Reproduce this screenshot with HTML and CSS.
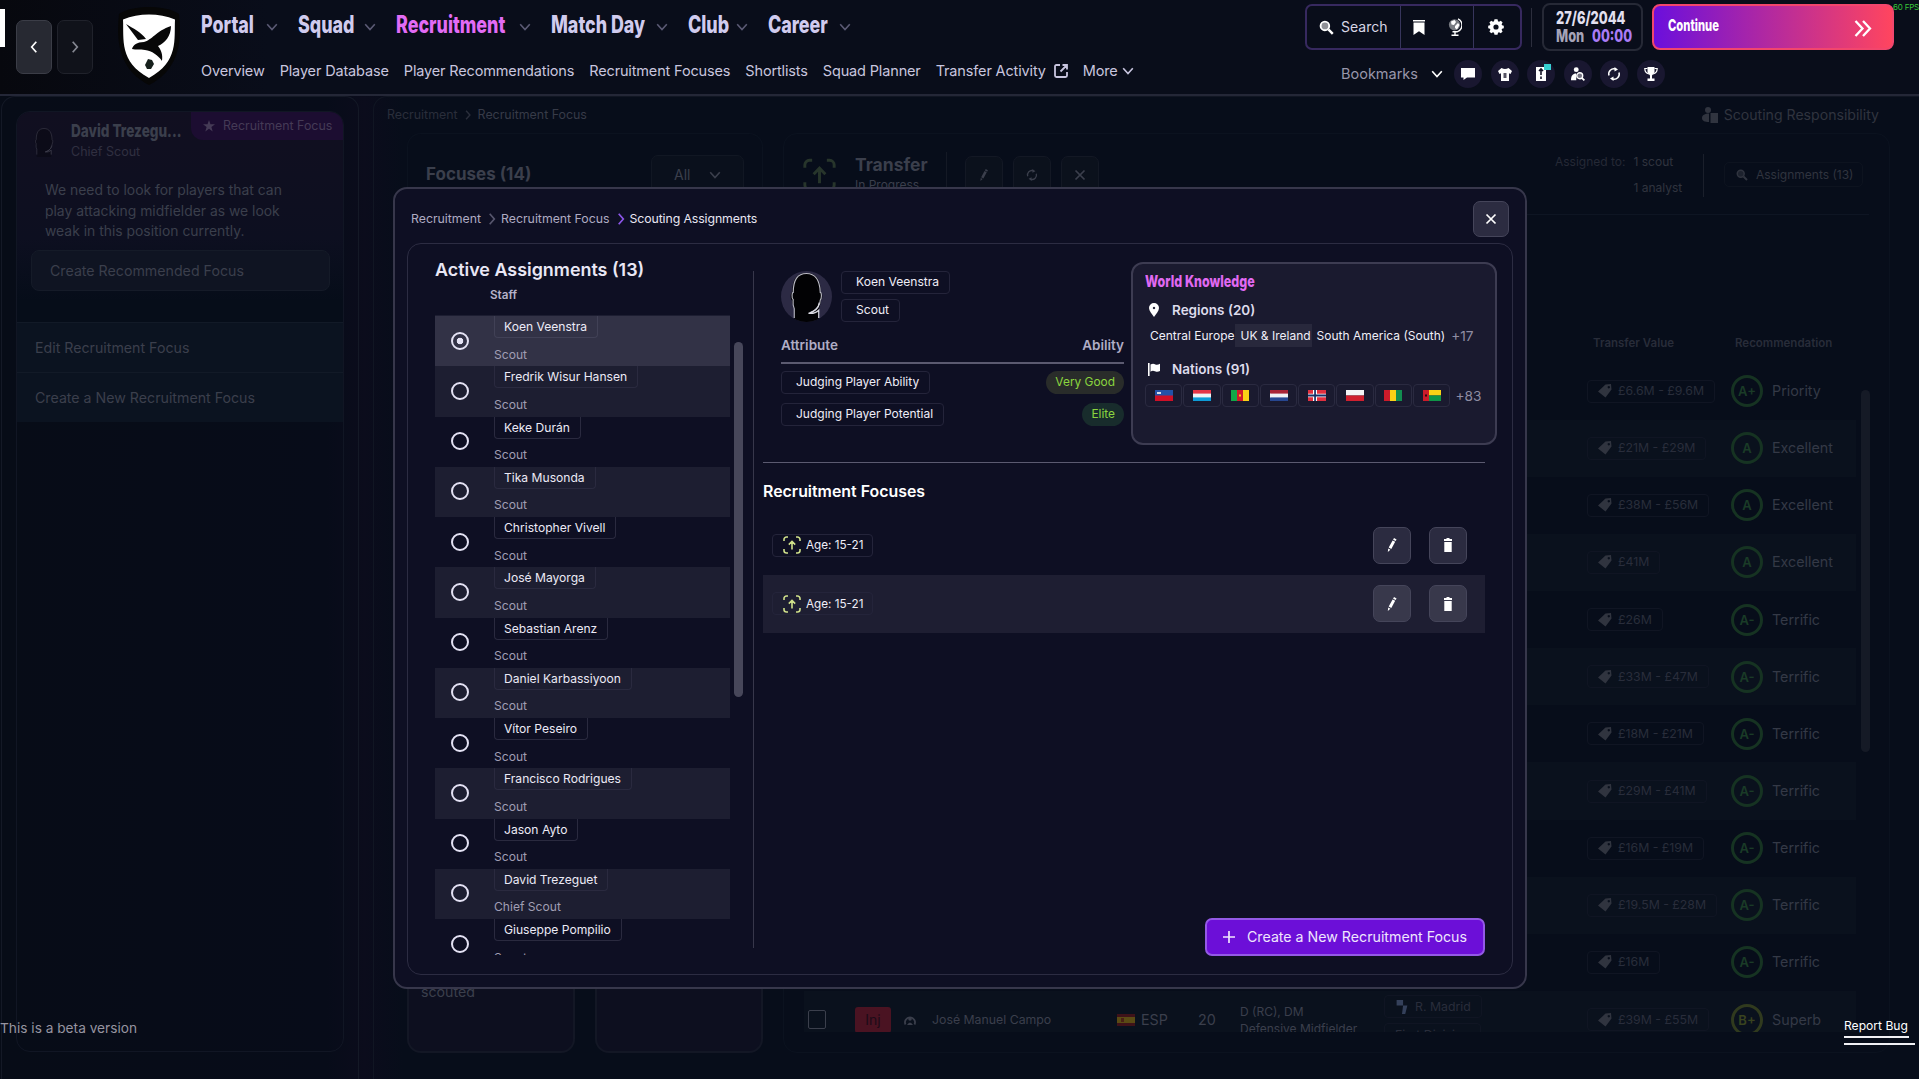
FILE: index.html
```html
<!DOCTYPE html>
<html lang="en">
<head>
<meta charset="utf-8">
<title>Scouting Assignments</title>
<link rel="stylesheet" href="styles.css">
</head>
<body>
<svg class="sprite" aria-hidden="true">
  <symbol id="down" viewBox="0 0 12 12"><path d="M1.2 3.2 6 8.6l4.800-5.400" fill="none" stroke="currentColor" stroke-width="1.600"/></symbol>
  <symbol id="right" viewBox="0 0 12 12"><path d="M3.700.8 8.300 6l-4.600 5.200" fill="none" stroke="currentColor" stroke-width="1.700"/></symbol>
  <symbol id="left" viewBox="0 0 12 12"><path d="M8.300.8 3.700 6l4.600 5.200" fill="none" stroke="currentColor" stroke-width="1.700"/></symbol>
  <symbol id="search" viewBox="0 0 16 16"><circle cx="6.300" cy="6.300" r="4.600" fill="currentColor" fill-opacity=".55" stroke="currentColor" stroke-width="2"/><path d="m10 10 4.700 4.700" stroke="currentColor" stroke-width="2.600"/></symbol>
  <symbol id="bookmark" viewBox="0 0 12 15"><path d="M0 0h12v1.500H0zM.5 2.500h11V15L6 11.200.5 15z" fill="currentColor"/></symbol>
  <symbol id="globe" viewBox="0 0 14 18"><circle cx="6.500" cy="6.800" r="5.600" fill="currentColor" fill-opacity=".45"/><path d="M3 3.500 6.500 2l1.500 2-2 3-2.500-.5zM7 8l3-3 1.500 2L9 11.500 7 10z" fill="currentColor"/><path d="M10 .8a7 7 0 0 1-1 13H4.500M7 14v3M3.500 17.200h7" fill="none" stroke="currentColor" stroke-width="1.400"/></symbol>
  <symbol id="gear" viewBox="0 0 16 16"><path fill="currentColor" fill-rule="evenodd" d="m6.500.3-.5 2-1 .4-1.800-1L1.400 3.500l1 1.700-.5 1.100-1.700.4v2.600l1.700.4.5 1.100-1 1.700 1.800 1.800 1.800-1 1 .4.500 2h3l.5-2 1-.4 1.800 1 1.800-1.800-1-1.700.5-1.100 1.700-.4V6.700l-1.700-.4-.5-1.100 1-1.700-1.800-1.800-1.800 1-1-.4-.5-2zM8 5.400a2.600 2.600 0 1 1 0 5.200 2.600 2.600 0 0 1 0-5.200z"/></symbol>
  <symbol id="refresh" viewBox="0 0 14 14"><path d="M2 8.500A5.200 5.200 0 0 1 8.500 2M12 5.500A5.200 5.200 0 0 1 5.500 12" fill="none" stroke="currentColor" stroke-width="1.500"/><path d="M7.500 0 11 2.500 7.500 4.500zM6.500 14 3 11.500l3.500-2z" fill="currentColor"/></symbol>
  <symbol id="pencil" viewBox="0 0 12 14"><path d="m8 0 2.600 1.400-.9 1.700-2.600-1.400zM6.600 2.400l2.600 1.400-3.900 7.200-2.600-1.400zM2.200 10.600l2.200 1.200L1.800 14z" fill="currentColor"/></symbol>
  <symbol id="trash" viewBox="0 0 12 14"><path d="M4.500 0h3v1H10v2H2V1h2.500zM2.300 4h7.400v10H2.300z" fill="currentColor"/></symbol>
  <symbol id="focus" viewBox="0 0 18 18"><path d="M1 5V3.500A2.500 2.500 0 0 1 3.500 1H5M13 1h1.500A2.500 2.500 0 0 1 17 3.500V5M17 13v1.500a2.500 2.500 0 0 1-2.500 2.500H13M5 17H3.500A2.500 2.500 0 0 1 1 14.500V13M9 13.500V6M5.800 8.600 9 5.300l3.200 3.300" fill="none" stroke="currentColor" stroke-width="1.600"/></symbol>
  <symbol id="tag" viewBox="0 0 14 14"><path fill="currentColor" fill-rule="evenodd" d="M7.500.5 13 0l.5 5.500-6 8L0 7.600zM10.800 2a1.200 1.200 0 1 0 .01 0z"/></symbol>
  <symbol id="cross" viewBox="0 0 12 12"><path d="m1.500 1.500 9 9m0-9-9 9" stroke="currentColor" stroke-width="1.700"/></symbol>
  <symbol id="scoutman" viewBox="0 0 16 16"><circle cx="6" cy="3" r="2.800" fill="currentColor"/><path d="M0 15c0-5 2-7.500 6-7.500V15z" fill="currentColor"/><circle cx="10" cy="10" r="3.400" fill="currentColor" fill-opacity=".4" stroke="currentColor" stroke-width="1.500"/><path d="m12.300 12.300 3 3" stroke="currentColor" stroke-width="2"/></symbol>
  <symbol id="head" viewBox="0 0 50 50"><path d="M13 50V37c-1-2-2-5-2-8-2-1-2-8 0-8C11 9 15 2 25 2s14 7 14 19c2 0 2 7 0 8 0 3-1 6-2 8v13z" fill="#020204"/><path d="M13 46v-9c-2-4-1-7-1-9-2-2-1-7 0-7C12 9 16 2.500 25 2.500S38 9 38.500 21c1.500 0 1.500 6 0 7.500 0 5-2 9-10 12.500" fill="none" stroke="#b9b9c4" stroke-width="1.100"/><path d="M37.500 31c-.5 5-3.500 8.500-10.500 10.500 4 .5 7.500-.5 10-3V46" fill="none" stroke="#dcdce4" stroke-width="1.200"/></symbol>
</svg>

<header class="topbar">
  <i class="corner"></i>
  <div class="history">
    <button class="hist on"><svg><use href="#left"/></svg></button>
    <button class="hist"><svg><use href="#right"/></svg></button>
  </div>
  <svg class="crest" viewBox="0 0 64 78"><path d="M32 0c12 0 22 2 30 7 2 20 4 54-30 71C-2 61 0 27 2 7 10 2 20 0 32 0z" fill="#070707"/><path d="M32 7.500c9 0 18 1.500 26 5-1 20 4 42-26 58.500C2 54.500 7 32.500 6 12.500c8-3.500 17-5 26-5z" fill="#fff"/><path d="M9 17c8 5 15 8 20 15l-8 1zM54 19c0 10-6 17-13 20 3 4 5 8 4 15-4-6-10-10-17-11-5-1-9 0-13-1 1-4 5-7 12-7 8-2 12-11 27-16z" fill="#070707"/><path d="m31 52 4 1 2 4-3 5h-4l-2-4z" fill="#16201c"/></svg>
  <div class="menus">
    <nav class="mainnav">
      <a><b class="cond">Portal</b><svg><use href="#down"/></svg></a>
      <a><b class="cond">Squad</b><svg><use href="#down"/></svg></a>
      <a class="active"><b class="cond">Recruitment</b><svg><use href="#down"/></svg></a>
      <a><b class="cond">Match Day</b><svg><use href="#down"/></svg></a>
      <a><b class="cond">Club</b><svg><use href="#down"/></svg></a>
      <a><b class="cond">Career</b><svg><use href="#down"/></svg></a>
    </nav>
    <nav class="subnav">
      <a>Overview</a><a>Player Database</a><a>Player Recommendations</a><a>Recruitment Focuses</a><a>Shortlists</a><a>Squad Planner</a><a>Transfer Activity<svg class="ext" viewBox="0 0 14 14"><path d="M6 1H2.500Q1 1 1 2.500v9Q1 13 2.500 13h9q1.500 0 1.500-1.500V8M8.500 1H13v4.500M13 1 6.500 7.500" fill="none" stroke="currentColor" stroke-width="1.800"/></svg></a><a>More<svg class="more"><use href="#down"/></svg></a>
    </nav>
  </div>
  <div class="tools">
    <div class="toolrow">
      <div class="searchbox">
        <div class="find"><svg><use href="#search"/></svg>Search</div>
        <div class="pair"><svg class="bm"><use href="#bookmark"/></svg><svg class="gl"><use href="#globe"/></svg></div>
        <div class="cog"><svg><use href="#gear"/></svg></div>
      </div>
      <i class="sep"></i>
      <div class="date"><b class="cond">27/6/2044</b><div><b class="cond mon">Mon</b><b class="cond time">00:00</b></div></div>
      <button class="continue"><b class="cond">Continue</b><svg viewBox="0 0 18 17"><path d="m1.500 1 7 7.500-7 7.500M9 1l7 7.500L9 16" fill="none" stroke="currentColor" stroke-width="2.300"/></svg></button>
    </div>
    <div class="bookmarks">
      <span>Bookmarks</span><svg class="bchev"><use href="#down"/></svg>
      <i><svg viewBox="0 0 14 14"><path d="M0 1h14v9.500H6L2.500 13v-2.500H0z" fill="currentColor"/></svg></i>
      <i><svg viewBox="0 0 14 14"><path d="M3.500 1Q7 3 10.500 1L14 4l-1.500 3-1.500-.8V14H3V6.200L1.500 7 0 4z" fill="currentColor"/><path d="M5.500 6h3v5h-3z" fill="#565464"/></svg></i>
      <i class="noted"><svg viewBox="0 0 14 14"><path d="M2 0h10v14H2z" fill="currentColor"/><path d="M7 2v6M7 9.500V12M5 4l2-2 2 2" stroke="#131225" stroke-width="1.600" fill="none"/></svg><em></em></i>
      <i><svg><use href="#scoutman"/></svg></i>
      <i><svg><use href="#refresh"/></svg></i>
      <i><svg viewBox="0 0 14 14"><path d="M3.500 0h7v5.500L8 8.500v3h2.500V14h-7v-2.500H6v-3l-2.500-3z" fill="currentColor"/><path d="M3.500 1.500H.8C.8 5 2.500 6.500 5 7M10.500 1.500h2.700C13.200 5 11.500 6.500 9 7" fill="none" stroke="currentColor" stroke-width="1.200"/></svg></i>
    </div>
  </div>
  <span class="fps">60 FPS</span>
</header>

<main class="app">
  <aside class="side">
    <div class="sidecard">
      <section class="advice">
        <span class="ribbon"><svg viewBox="0 0 14 14"><path d="m7 0 1.700 5H14L9.800 8.200l1.500 5.200L7 10.300l-4.300 3.100 1.500-5.200L0 5h5.300z" fill="currentColor"/></svg>Recruitment Focus</span>
        <div class="person"><svg><use href="#head"/></svg><div><b class="cond">David Trezegu...</b><span>Chief Scout</span></div></div>
        <p>We need to look for players that can<br>play attacking midfielder as we look<br>weak in this position currently.</p>
        <div class="recommended">Create Recommended Focus</div>
      </section>
      <div class="action">Edit Recruitment Focus</div>
      <div class="action">Create a New Recruitment Focus</div>
    </div>
  </aside>
  <section class="content">
    <div class="contenthead">
      <span>Recruitment</span><svg><use href="#right"/></svg><span class="here">Recruitment Focus</span>
      <div class="responsibility"><svg viewBox="0 0 16 16"><circle cx="6" cy="3" r="3" fill="currentColor"/><path d="M0 11c0-3 3-4.500 7-4.500V15C3 15 0 14 0 11zM8.500 6H16v10H8.500z" fill="currentColor"/></svg>Scouting Responsibility</div>
    </div>
    <div class="columns">
      <div class="focuses">
        <div class="fochead"><b>Focuses (14)</b><span class="all">All<svg><use href="#down"/></svg></span></div>
        <div class="foccards"><div class="foccard">scouted</div><div class="foccard"></div></div>
      </div>
      <div class="transfer">
        <div class="thead">
          <svg class="ticon"><use href="#focus"/></svg>
          <div class="tname"><b>Transfer</b><span>In Progress</span></div>
          <div class="tbtns"><i><svg><use href="#pencil"/></svg></i><i><svg><use href="#refresh"/></svg></i><i><svg><use href="#cross"/></svg></i></div>
          <div class="assigned"><span>Assigned to:</span><span>1 scout<br>1 analyst</span></div>
          <div class="assignments"><svg><use href="#search"/></svg>Assignments (13)</div>
        </div>
        <div class="tablewrap">
          <div class="trow labels"><span>Transfer Value</span><span>Recommendation</span></div>
          <div class="trow"><span><em><svg><use href="#tag"/></svg>£6.6M - £9.6M</em></span><i>A+</i><span>Priority</span></div>
          <div class="trow"><span><em><svg><use href="#tag"/></svg>£21M - £29M</em></span><i>A</i><span>Excellent</span></div>
          <div class="trow"><span><em><svg><use href="#tag"/></svg>£38M - £56M</em></span><i>A</i><span>Excellent</span></div>
          <div class="trow"><span><em><svg><use href="#tag"/></svg>£41M</em></span><i>A</i><span>Excellent</span></div>
          <div class="trow"><span><em><svg><use href="#tag"/></svg>£26M</em></span><i>A-</i><span>Terrific</span></div>
          <div class="trow"><span><em><svg><use href="#tag"/></svg>£33M - £47M</em></span><i>A-</i><span>Terrific</span></div>
          <div class="trow"><span><em><svg><use href="#tag"/></svg>£18M - £21M</em></span><i>A-</i><span>Terrific</span></div>
          <div class="trow"><span><em><svg><use href="#tag"/></svg>£29M - £41M</em></span><i>A-</i><span>Terrific</span></div>
          <div class="trow"><span><em><svg><use href="#tag"/></svg>£16M - £19M</em></span><i>A-</i><span>Terrific</span></div>
          <div class="trow"><span><em><svg><use href="#tag"/></svg>£19.5M - £28M</em></span><i>A-</i><span>Terrific</span></div>
          <div class="trow"><span><em><svg><use href="#tag"/></svg>£16M</em></span><i>A-</i><span>Terrific</span></div>
          <div class="trow player">
            <div class="who">
              <u class="check"></u><u class="inj">Inj</u>
              <svg class="face" viewBox="0 0 12 12"><path d="M1.500 10.500a5 5 0 1 1 9 0" fill="none" stroke="currentColor" stroke-width="1.800"/><circle cx="6" cy="5" r="1.800" fill="currentColor"/><path d="M3 11q3-5 6 0" fill="currentColor"/></svg>
              <span class="pname">José Manuel Campo</span>
              <svg class="esp" viewBox="0 0 18 12"><path d="M0 0h18v12H0z" fill="#3f1219"/><path d="M0 3h18v6H0z" fill="#5a4a14"/><path d="M4 4h3v4H4z" fill="#4a2015"/></svg>
              <span class="nat">ESP</span><span class="age">20</span>
              <span class="pos">D (RC), DM<br>Defensive Midfielder</span>
              <span class="club"><em><svg viewBox="0 0 10 13"><path d="M0 0h6v5H0zM6 5h4L8 13H5z" fill="#34405a"/></svg>R. Madrid</em><em>First Division</em></span>
            </div>
            <span><em><svg><use href="#tag"/></svg>£39M - £55M</em></span><i class="bplus">B+</i><span>Superb</span>
          </div>
          <i class="tscroll"></i>
        </div>
      </div>
    </div>
  </section>
</main>

<div class="modal">
  <div class="modalhead">
    <span>Recruitment</span><svg><use href="#right"/></svg><span>Recruitment Focus</span><svg class="lit"><use href="#right"/></svg><span class="here">Scouting Assignments</span>
    <button class="iconbtn close"><svg><use href="#cross"/></svg></button>
  </div>
  <div class="body">
    <section class="staff">
      <h2>Active Assignments (13)</h2>
      <h4>Staff</h4>
      <div class="listwrap">
        <div class="list">
          <div class="member picked"><u></u><div><em>Koen Veenstra</em><span>Scout</span></div></div>
          <div class="member"><u></u><div><em>Fredrik Wisur Hansen</em><span>Scout</span></div></div>
          <div class="member"><u></u><div><em>Keke Durán</em><span>Scout</span></div></div>
          <div class="member"><u></u><div><em>Tika Musonda</em><span>Scout</span></div></div>
          <div class="member"><u></u><div><em>Christopher Vivell</em><span>Scout</span></div></div>
          <div class="member"><u></u><div><em>José Mayorga</em><span>Scout</span></div></div>
          <div class="member"><u></u><div><em>Sebastian Arenz</em><span>Scout</span></div></div>
          <div class="member"><u></u><div><em>Daniel Karbassiyoon</em><span>Scout</span></div></div>
          <div class="member"><u></u><div><em>Vítor Peseiro</em><span>Scout</span></div></div>
          <div class="member"><u></u><div><em>Francisco Rodrigues</em><span>Scout</span></div></div>
          <div class="member"><u></u><div><em>Jason Ayto</em><span>Scout</span></div></div>
          <div class="member"><u></u><div><em>David Trezeguet</em><span>Chief Scout</span></div></div>
          <div class="member"><u></u><div><em>Giuseppe Pompilio</em><span>Scout</span></div></div>
        </div>
        <i class="bar"></i>
      </div>
    </section>
    <section class="detail">
      <div class="upper">
        <div class="profile">
          <div class="id"><span class="avatar"><svg><use href="#head"/></svg></span><div class="chips"><em class="chip">Koen Veenstra</em><em class="chip">Scout</em></div></div>
          <div class="attrhead"><b>Attribute</b><b>Ability</b></div>
          <div class="attr"><em class="chip">Judging Player Ability</em><span class="pill">Very Good</span></div>
          <div class="attr"><em class="chip">Judging Player Potential</em><span class="pill elite">Elite</span></div>
        </div>
        <div class="world">
          <b class="cond title">World Knowledge</b>
          <div class="wh"><svg viewBox="0 0 10 14"><path fill="#fff" fill-rule="evenodd" d="M5 0a5 5 0 0 1 5 5c0 3-3 6-5 9C3 11 0 8 0 5a5 5 0 0 1 5-5zm0 3.800a1.200 1.200 0 1 0 .01 0z"/></svg><b>Regions (20)</b></div>
          <div class="regions"><span>Central Europe</span><span class="uk">UK &amp; Ireland</span><span>South America (South)</span><small>+17</small></div>
          <div class="wh nations"><svg viewBox="0 0 12 13"><path d="M0 0h1.600v13H0zM2.500 1.500Q5 0 7 1.200t5-.4V8q-2.500 1.500-5 .3t-4.500.4z" fill="#fff"/></svg><b>Nations (91)</b></div>
          <div class="flags">
            <em><svg viewBox="0 0 18 11"><path d="M0 0h18v11H0z" fill="#cf1027"/><path d="M0 0h18v5.500H0z" fill="#2352a8"/><path d="M2 2h4v2H2z" fill="#d9dde8"/></svg></em>
            <em><svg viewBox="0 0 18 11"><path d="M0 0h18v11H0z" fill="#f0f2f4"/><path d="M0 0h18v3.600H0z" fill="#e63546"/><path d="M0 7.400h18V11H0z" fill="#0e9bd6"/></svg></em>
            <em><svg viewBox="0 0 18 11"><path d="M0 0h6v11H0z" fill="#12a848"/><path d="M6 0h6v11H6z" fill="#d01b2b"/><path d="M12 0h6v11h-6z" fill="#fbd116"/><path d="M8 4.500h2v2H8z" fill="#fbd116"/></svg></em>
            <em><svg viewBox="0 0 18 11"><path d="M0 0h18v11H0z" fill="#f0f0f4"/><path d="M0 0h18v3.600H0z" fill="#a92436"/><path d="M0 7.400h18V11H0z" fill="#27468f"/></svg></em>
            <em><svg viewBox="0 0 18 11"><path d="M0 0h18v11H0z" fill="#e0303f"/><path d="M5 0h4v11H5zM0 3.800h18v3.400H0z" fill="#fff"/><path d="M6.200 0h1.700v11H6.200zM0 4.600h18v1.800H0z" fill="#183068"/></svg></em>
            <em><svg viewBox="0 0 18 11"><path d="M0 0h18v5.500H0z" fill="#f4f4f6"/><path d="M0 5.500h18V11H0z" fill="#d0202f"/></svg></em>
            <em><svg viewBox="0 0 18 11"><path d="M0 0h6v11H0z" fill="#cc1b2a"/><path d="M6 0h6v11H6z" fill="#fbd116"/><path d="M12 0h6v11h-6z" fill="#128c50"/></svg></em>
            <em><svg viewBox="0 0 18 11"><path d="M0 0h18v5.500H0z" fill="#fbd116"/><path d="M0 5.500h18V11H0z" fill="#0f9548"/><path d="M0 0h6v11H0z" fill="#cc1b2a"/><path d="M2 4.500h2v2H2z" fill="#2a0a0c"/></svg></em>
            <small>+83</small>
          </div>
        </div>
      </div>
      <h3>Recruitment Focuses</h3>
      <div class="focusrow"><em class="chip"><svg><use href="#focus"/></svg>Age: 15-21</em><button class="iconbtn"><svg><use href="#pencil"/></svg></button><button class="iconbtn"><svg><use href="#trash"/></svg></button></div>
      <div class="focusrow alt"><em class="chip"><svg><use href="#focus"/></svg>Age: 15-21</em><button class="iconbtn"><svg><use href="#pencil"/></svg></button><button class="iconbtn"><svg><use href="#trash"/></svg></button></div>
      <button class="create"><svg viewBox="0 0 12 12"><path d="M6 0v12M0 6h12" stroke="currentColor" stroke-width="1.700"/></svg>Create a New Recruitment Focus</button>
    </section>
  </div>
</div>

<div class="beta">This is a beta version</div>
<div class="bug"><span>Report Bug</span></div>
</body>
</html>
```
FILE: styles.css
```css
* { box-sizing: border-box; }
html, body { margin: 0; height: 100%; overflow: hidden; }
body {
  width: 1919px; height: 1079px; position: relative;
  background: #080d1a; color: #e6e4f2;
  font: 12.1px/16px Inter, "Liberation Sans", sans-serif;
}
i, em, u { font-style: normal; text-decoration: none; }
button { font: inherit; color: inherit; padding: 0; background: none; border: 0; }
svg { display: block; flex: none; width: 12px; height: 12px; }
.sprite { display: none; }
h2, h3, h4, p { margin: 0; }
.cond { display: inline-block; transform: scaleX(.755); transform-origin: 0 50%; white-space: nowrap; font-weight: 800; }

/* top bar */
.topbar { position: relative; height: 96px; display: flex; border-bottom: 2px solid #242737; background: linear-gradient(90deg, #07080e, #090d1a 14%); }
.corner { width: 5px; height: 38px; margin-top: 9px; background: #fff; }
.history { display: flex; gap: 5px; margin: 20px 0 0 11px; }
.hist { width: 36px; height: 54px; border: 1px solid #20222b; border-radius: 7px; background: #10121a; color: #858791; display: grid; place-items: center; }
.hist.on { background: #272932; border-color: #3b3d47; color: #fff; }
.crest { width: 64px; height: 78px; margin: 7px 0 0 24px; }
.menus { flex: none; width: 1124px; padding: 10px 0 0 20px; }
.mainnav { display: grid; grid-template-columns: 97px 98px 155px 137px 80px 103px; height: 31px; align-items: center; font-size: 24px; line-height: 30px; color: #d0cbee; }
.mainnav a { display: flex; justify-content: space-between; align-items: center; padding-right: 20px; }
.mainnav .cond { width: 0; transform: scaleX(.745); margin-top: -1px; }
.mainnav svg { color: #5b5a74; margin-top: 3px; }
.mainnav .active { color: #e26bf5; }
.subnav { display: flex; gap: 15px; margin-top: 21px; font-size: 14.500px; line-height: 18px; color: #c8c5df; letter-spacing: -.15px; }
.subnav a { display: flex; white-space: nowrap; }
.ext { width: 14px; height: 14px; margin: 2px 0 0 8px; }
.more { margin: 3px 0 0 4px; }
.tools { flex: none; width: 614px; padding-top: 3px; }
.toolrow { display: flex; align-items: center; height: 48px; }
.searchbox { display: flex; width: 217px; height: 46px; border: 2px solid #37295f; border-radius: 7px; color: #fff; }
.searchbox > div { display: flex; align-items: center; }
.find { width: 93px; padding-left: 12px; gap: 7px; font-size: 14px; color: #d8d6e6; }
.find svg { width: 15px; height: 15px; color: #fff; }
.pair { width: 74px; border: solid #37355c; border-width: 0 1px; padding-left: 12px; gap: 23px; }
.bm { height: 15px; } .gl { width: 14px; height: 18px; }
.cog { padding-left: 14px; } .cog svg { width: 16px; height: 16px; }
.sep { width: 1px; height: 39px; background: #2c2e3d; margin: 0 10px 0 9px; }
.date { width: 101px; height: 48px; border: 2px solid #262936; border-radius: 8px; padding: 4px 0 0 12px; font-size: 17.500px; line-height: 18px; margin-right: 9px; color: #e2e0f0; }
.date .cond { display: block; width: 0; transform: scaleX(.735); }
.date div { display: flex; gap: 36px; }
.mon { color: #a6a4b8; } .time { color: #aa7cf6; }
.continue { display: flex; align-items: center; justify-content: space-between; width: 242px; height: 46px; padding: 0 20px 0 14px; border: 2px solid #f2466d; border-radius: 8px; background: linear-gradient(90deg, #6b0fdc, #ff455f); color: #fff; }
.continue .cond { font-size: 16.500px; width: 0; margin-top: -4px; transform: scaleX(.68); }
.continue svg { width: 18px; height: 17px; margin-top: 2px; }
.bookmarks { display: flex; align-items: center; height: 28px; margin: 9px 0 0 36px; color: #fff; }
.bookmarks span { width: 90px; font-size: 14.500px; color: #9896aa; }
.bchev { margin-right: 11px; }
.bookmarks i { position: relative; width: 28px; height: 28px; border-radius: 50%; background: #191730; display: grid; place-items: center; margin-right: 8.500px; }
.bookmarks i svg { width: 14px; height: 14px; }
.noted em { position: absolute; right: 4px; top: 4px; width: 7px; height: 6px; background: #37cfd2; }
.fps { position: absolute; right: 0; top: 2px; font-size: 8px; line-height: 10px; letter-spacing: -.2px; color: #38c538; }

/* dimmed application */
.app { display: flex; gap: 14px; height: 983px; padding-left: 1px; color: #3b3f4c; background: linear-gradient(90deg, #070c17, #070c19 17%, #0b0c1c 19%, #070d1a 21%); }
.side { flex: none; width: 358px; padding: 14px 14px 0; border: 1px solid #141926; border-bottom: 0; border-radius: 14px 14px 0 0; }
.sidecard { height: 941px; border: 1px solid #111624; border-radius: 14px; overflow: hidden; }
.advice { position: relative; height: 210px; background: linear-gradient(#110f20, #0d0f20 60%, #060d19 90%); }
.ribbon { position: absolute; right: 0; top: 0; width: 152px; height: 28px; display: flex; align-items: center; gap: 8px; padding-left: 12px; border-radius: 0 12px 0 12px; background: #1c0d31; color: #453b56; font-size: 12.400px; white-space: nowrap; }
.person { display: flex; gap: 12px; padding: 12px 0 0 12px; }
.person > svg { width: 30px; height: 36px; opacity: .25; }
.person .cond { display: block; font-size: 18px; line-height: 19px; width: 0; margin-top: -3px; }
.person span { display: block; line-height: 16px; font-size: 12.500px; margin-top: 4px; color: #302f40; }
.advice p { padding: 20px 0 0 28px; font-size: 13.900px; line-height: 20.500px; white-space: nowrap; }
.recommended { margin: 8px 13px 0 14px; height: 41px; border: 1px solid #151b28; border-radius: 8px; background: #0f1422; padding-left: 18px; line-height: 39px; font-size: 14.200px; }
.action { height: 50px; background: #0b1320; border-top: 1px solid #121a27; padding-left: 18px; line-height: 49px; font-size: 14.200px; }
.content { flex: 1; border: 1px solid #111623; border-bottom: 0; border-radius: 14px 0 0 0; padding: 0 32px; }
.contenthead { display: flex; align-items: center; height: 36px; margin-left: -19px; font-size: 12.400px; color: #2a2e3b; }
.contenthead svg { margin: 0 4px; height: 10px; }
.contenthead .here { color: #373b48; }
.responsibility { margin-left: auto; display: flex; gap: 6px; font-size: 14.100px; color: #30343f; padding-right: 11px; }
.responsibility svg { width: 16px; height: 16px; margin: 0; }
.columns { display: flex; gap: 20px; height: 920px; margin-left: 1px; }
.focuses { flex: none; width: 356px; display: flex; flex-direction: column; justify-content: space-between; }
.fochead { display: flex; justify-content: space-between; padding: 21px 18px 0 18px; border: 1px solid #0b121f; border-bottom: 0; border-radius: 14px 14px 0 0; height: 801px; }
.fochead b { font-size: 17px; line-height: 38px; }
.all { display: flex; justify-content: space-between; align-items: center; width: 93px; height: 39px; padding: 0 22px; border: 1px solid #111723; border-radius: 7px; background: #0a101c; font-size: 14px; }
.foccards { display: grid; grid-template-columns: 1fr 1fr; gap: 20px; height: 119px; }
.foccard { border: 2px solid #131725; border-top: 0; border-radius: 0 0 14px 14px; background: #0d0f1f; font-size: 14.200px; padding: 50px 0 0 12px; }
.transfer { flex: none; width: 1107px; border: 1px solid #0b121f; border-radius: 14px; padding: 18px 34px 0 19px; }
.thead { display: flex; height: 63px; border-bottom: 1px solid #0e1523; margin-right: -14px; }
.ticon { width: 33px; height: 36px; margin-top: 5px; color: #27352b; }
.tname { width: 92px; margin-left: 19px; border-right: 1px solid #141925; }
.tname b, .tname span { display: block; line-height: 22px; font-size: 17.500px; margin-top: 2px; }
.tname span { font-size: 12px; margin-top: 0; line-height: 18px; }
.tbtns { display: flex; gap: 10px; margin: 4px 0 0 18px; }
.tbtns i { width: 38px; height: 38px; border: 1px solid #131824; border-radius: 7px; background: #0b111c; display: grid; place-items: center; }
.assigned { display: flex; gap: 8px; margin: -3px 0 0 456px; width: 149px; font-size: 12px; line-height: 25.500px; white-space: nowrap; color: #30343f; }
.assigned span:first-child { color: #252936; }
.assigned::after { content: ""; width: 1px; height: 43px; margin: 5px 0 0 auto; background: #1a1f2b; }
.assignments { display: flex; align-items: center; gap: 8px; height: 25px; margin: 10px 0 0 20px; padding: 0 9px 0 11px; border: 1px solid #0d131f; border-radius: 5px; white-space: nowrap; color: #30343f; font-size: 12px; }
.tablewrap { position: relative; height: 817px; margin-left: 1px; overflow: hidden; padding-top: 109px; margin-right: -16px; }
.trow { display: flex; align-items: center; height: 57.150px; width: 1052px; justify-content: flex-end; }
.trow > span { width: 84px; font-size: 14.300px; white-space: nowrap; color: #343946; }
.trow > span:first-child, .trow .who + span { width: 144px; }
.trow > span em, .club em { display: inline-flex; align-items: center; height: 23px; gap: 6px; padding: 0 10px; border: 1px solid #101523; border-radius: 4px; font-size: 12.300px; color: #292d3b; }
.trow em svg { width: 14px; height: 14px; color: #30343f; }
.trow > i:not(.tscroll) { width: 32px; height: 32px; border: 3px solid #163322; border-radius: 50%; font: 600 13px/26px Inter, sans-serif; color: #1a3b27; text-align: center; margin: 0 9px 0 0; }
.trow:nth-child(odd) { background: #0a111d; }
.trow.labels { height: 38.500px; background: none; font-weight: 600; }
.trow.labels > span { font-size: 11.500px; width: 121px; color: #282c39; }
.trow.labels > span:first-child { width: 142px; }
.trow > i.bplus:not(.tscroll) { border-color: #303a1e; color: #39431f; }
.trow.player { height: 57px; }
.who { flex: 1; display: flex; align-items: center; padding-left: 4px; white-space: nowrap; font-size: 12.300px; }
.check { width: 18px; height: 19px; border: 1px solid #3b3f4c; border-radius: 2px; }
.inj { width: 36px; height: 26px; margin-left: 29px; background: #4a1322; color: #1d0b18; text-align: center; line-height: 26px; border-radius: 3px; font-size: 14px; }
.face { margin: 0 16px 0 13px; }
.pname { width: 185px; }
.esp { width: 18px; height: 12px; }
.nat { width: 57px; margin-left: 6px; font-size: 14.300px; }
.age { width: 42px; font-size: 14.300px; }
.pos { width: 144px; line-height: 17px; font-size: 12px; }
.club { width: 104px; height: 49px; display: flex; flex-direction: column; align-items: flex-start; gap: 5px; }
.club em { flex: none; }
.club svg { width: 10px; height: 13px; }
.tscroll { position: absolute; right: 1px; top: 175px; width: 9px; height: 362px; border-radius: 5px; background: #151a26; }

/* dialog over the application */
.modal { position: absolute; left: 393px; top: 187px; width: 1134px; height: 802px; border: 2px solid #37374b; border-radius: 14px; background: #0e0f23; padding: 12px; display: flex; flex-direction: column; }
.modalhead { display: flex; align-items: center; height: 36px; margin-bottom: 6px; padding: 0 4px; color: #aeabc2; font-size: 12.300px; }
.modalhead svg { margin: 0 3px 0 5px; color: #57566d; }
.modalhead .lit { color: #8c56e8; }
.modalhead .here { color: #e8e6f3; letter-spacing: -.1px; }
.iconbtn { width: 38px; height: 37px; border: 1px solid #45455a; border-radius: 7px; background: #2c2c41; color: #fff; display: grid; place-items: center; }
.iconbtn svg { height: 14px; }
.close { width: 36px; height: 36px; margin-left: auto; }
.modalhead .close svg { margin: 0; color: #fff; }
.body { flex: 1; display: flex; border: 1px solid #2c2c42; border-radius: 14px; min-height: 0; padding: 14px 15px 0 27px; }
.staff { flex: none; width: 308px; }
.staff h2 { font-size: 17.900px; line-height: 24px; font-weight: 600; color: #e9e7f5; }
.staff h4 { margin: 5px 0 0 55px; font-size: 11.700px; line-height: 16px; font-weight: 600; color: #b5b2c8; }
.listwrap { display: flex; gap: 4px; margin-top: 12px; height: 640px; }
.list { width: 295px; height: 640px; overflow: hidden; border-top: 1px solid #1d1e32; }
.member { display: flex; height: 50.280px; padding-left: 16px; }
.member:nth-child(even) { background: #1d1e31; }
.member.picked { background: #323246; }
.member u { width: 18px; height: 18px; margin: 15.500px 25px 0 0; border: 2px solid #e4e2f4; border-radius: 50%; }
.member.picked u { background: radial-gradient(circle, #e4e2f4 3px, transparent 3.600px); }
.member em { display: block; width: max-content; height: 22px; padding: 0 10px 0 9px; border: 1px solid #2a2a3f; border-top: 0; border-radius: 0 0 4px 4px; line-height: 21px; color: #eceaf6; }
.member.picked em { border-color: #414156; }
.member span { display: block; margin-top: 7.500px; line-height: 17px; color: #a09eb4; }
.bar { width: 9px; height: 355px; margin-top: 27px; border-radius: 5px; background: #47475a; }
.detail { position: relative; flex: 1; display: flex; flex-direction: column; padding-left: 10px; }
.detail::before { content: ""; position: absolute; left: 10px; top: 13px; width: 1px; height: 677px; background: #37374b; }
.upper { display: flex; height: 205px; margin: 0 0 0 11px; padding-left: 17px; }
.profile { flex: none; width: 343px; padding-top: 13px; }
.id { display: flex; gap: 9px; height: 51px; }
.avatar { width: 51px; height: 51px; border-radius: 50%; background: #2c2a44; overflow: hidden; }
.avatar svg { width: 51px; height: 51px; }
.chips { display: flex; flex-direction: column; gap: 5px; align-items: flex-start; }
.chip { display: inline-flex; align-items: center; height: 23px; padding: 0 10px 2px 14px; border: 1px solid #24243a; border-radius: 4px; color: #eeedf7; white-space: nowrap; }
.attr .chip { font-size: 12px; }
.attrhead { display: flex; justify-content: space-between; height: 42px; padding-top: 15px; border-bottom: 2px solid #5b5a70; color: #b0adc6; font-size: 13.500px; margin-bottom: 7px; }
.attrhead b { font-weight: 600; }
.attr { display: flex; justify-content: space-between; height: 32px; }
.pill { height: 23px; line-height: 22px; padding: 0 9px; border-radius: 12px; background: #292c2a; color: #8bd43f; font-size: 11.900px; }
.pill.elite { background: #182c2c; }
.world { flex: none; width: 366px; height: 183px; margin: 4px 0 0 7px; border: 2px solid #3d3c52; border-radius: 12px; background: #1a1a2f; padding: 7px 12px; }
.title { font-size: 16.500px; line-height: 20px; color: #e069f2; display: block; }
.wh { display: flex; align-items: center; height: 18px; margin-top: 10px; padding-left: 4px; }
.wh svg { width: 10px; height: 14px; margin-right: 13px; }
.nations svg { width: 12px; height: 13px; margin: 0 12px 0 -1px; }
.wh b { font-size: 13.500px; font-weight: 600; color: #dedcec; }
.wh.nations { margin-top: 13px; }
.regions { display: flex; align-items: center; height: 23px; margin-top: 5px; padding-left: 5px; color: #f0eff8; white-space: nowrap; font-size: 12px; }
.regions .uk { background: #28283c; line-height: 23px; padding: 0 1px 0 5px; margin: 0 5px 0 1px; }
small { color: #8f8da3; font-size: 13.700px; }
.regions small { margin-left: 6px; }
.flags { display: flex; gap: 1px; align-items: center; margin-top: 6px; height: 23px; }
.flags em { width: 37.300px; height: 23px; border: 1px solid #2a2a40; border-radius: 4px; display: grid; place-items: center; }
.flags svg { width: 18px; height: 11px; }
.flags small { margin-left: 4px; }
.detail h3 { margin-left: 10px; width: 722px; border-top: 1px solid #5b5a70; padding: 18px 0 0; font-size: 15.900px; line-height: 22px; height: 54px; font-weight: 600; color: #fff; margin-top: -1px; }
.focusrow { display: flex; align-items: center; gap: 18px; width: 722px; height: 58.500px; margin-left: 10px; padding: 0 18px 0 9px; }
.focusrow.alt { background: #1e1e32; }
.focusrow .iconbtn { background: #2b2b40; }
.focusrow.alt .iconbtn { background: #38384b; }
.focusrow .chip { margin-right: auto; gap: 5px; padding: 0 9px 0 10px; font-size: 11.700px; }
.focusrow .chip svg { width: 18px; height: 18px; color: #cfe08a; }
.create { display: flex; align-items: center; justify-content: center; gap: 12px; width: 280px; height: 38px; margin: auto 12px 18px auto; border: 2px solid #9459e6; border-radius: 7px; background: #6c0fd8; font-size: 14.200px; white-space: nowrap; color: #efe6fd; }

.beta { position: absolute; left: 0; top: 1019px; font-size: 13.700px; line-height: 18px; color: #9694a0; }
.bug { position: absolute; left: 1844px; top: 1016px; width: 71px; border-bottom: 2px solid #f0f0f4; padding-bottom: 5px; }
.bug span { display: block; width: 65px; height: 22px; line-height: 19px; white-space: nowrap; border-bottom: 2px solid #f0f0f4; color: #fff; }
```
